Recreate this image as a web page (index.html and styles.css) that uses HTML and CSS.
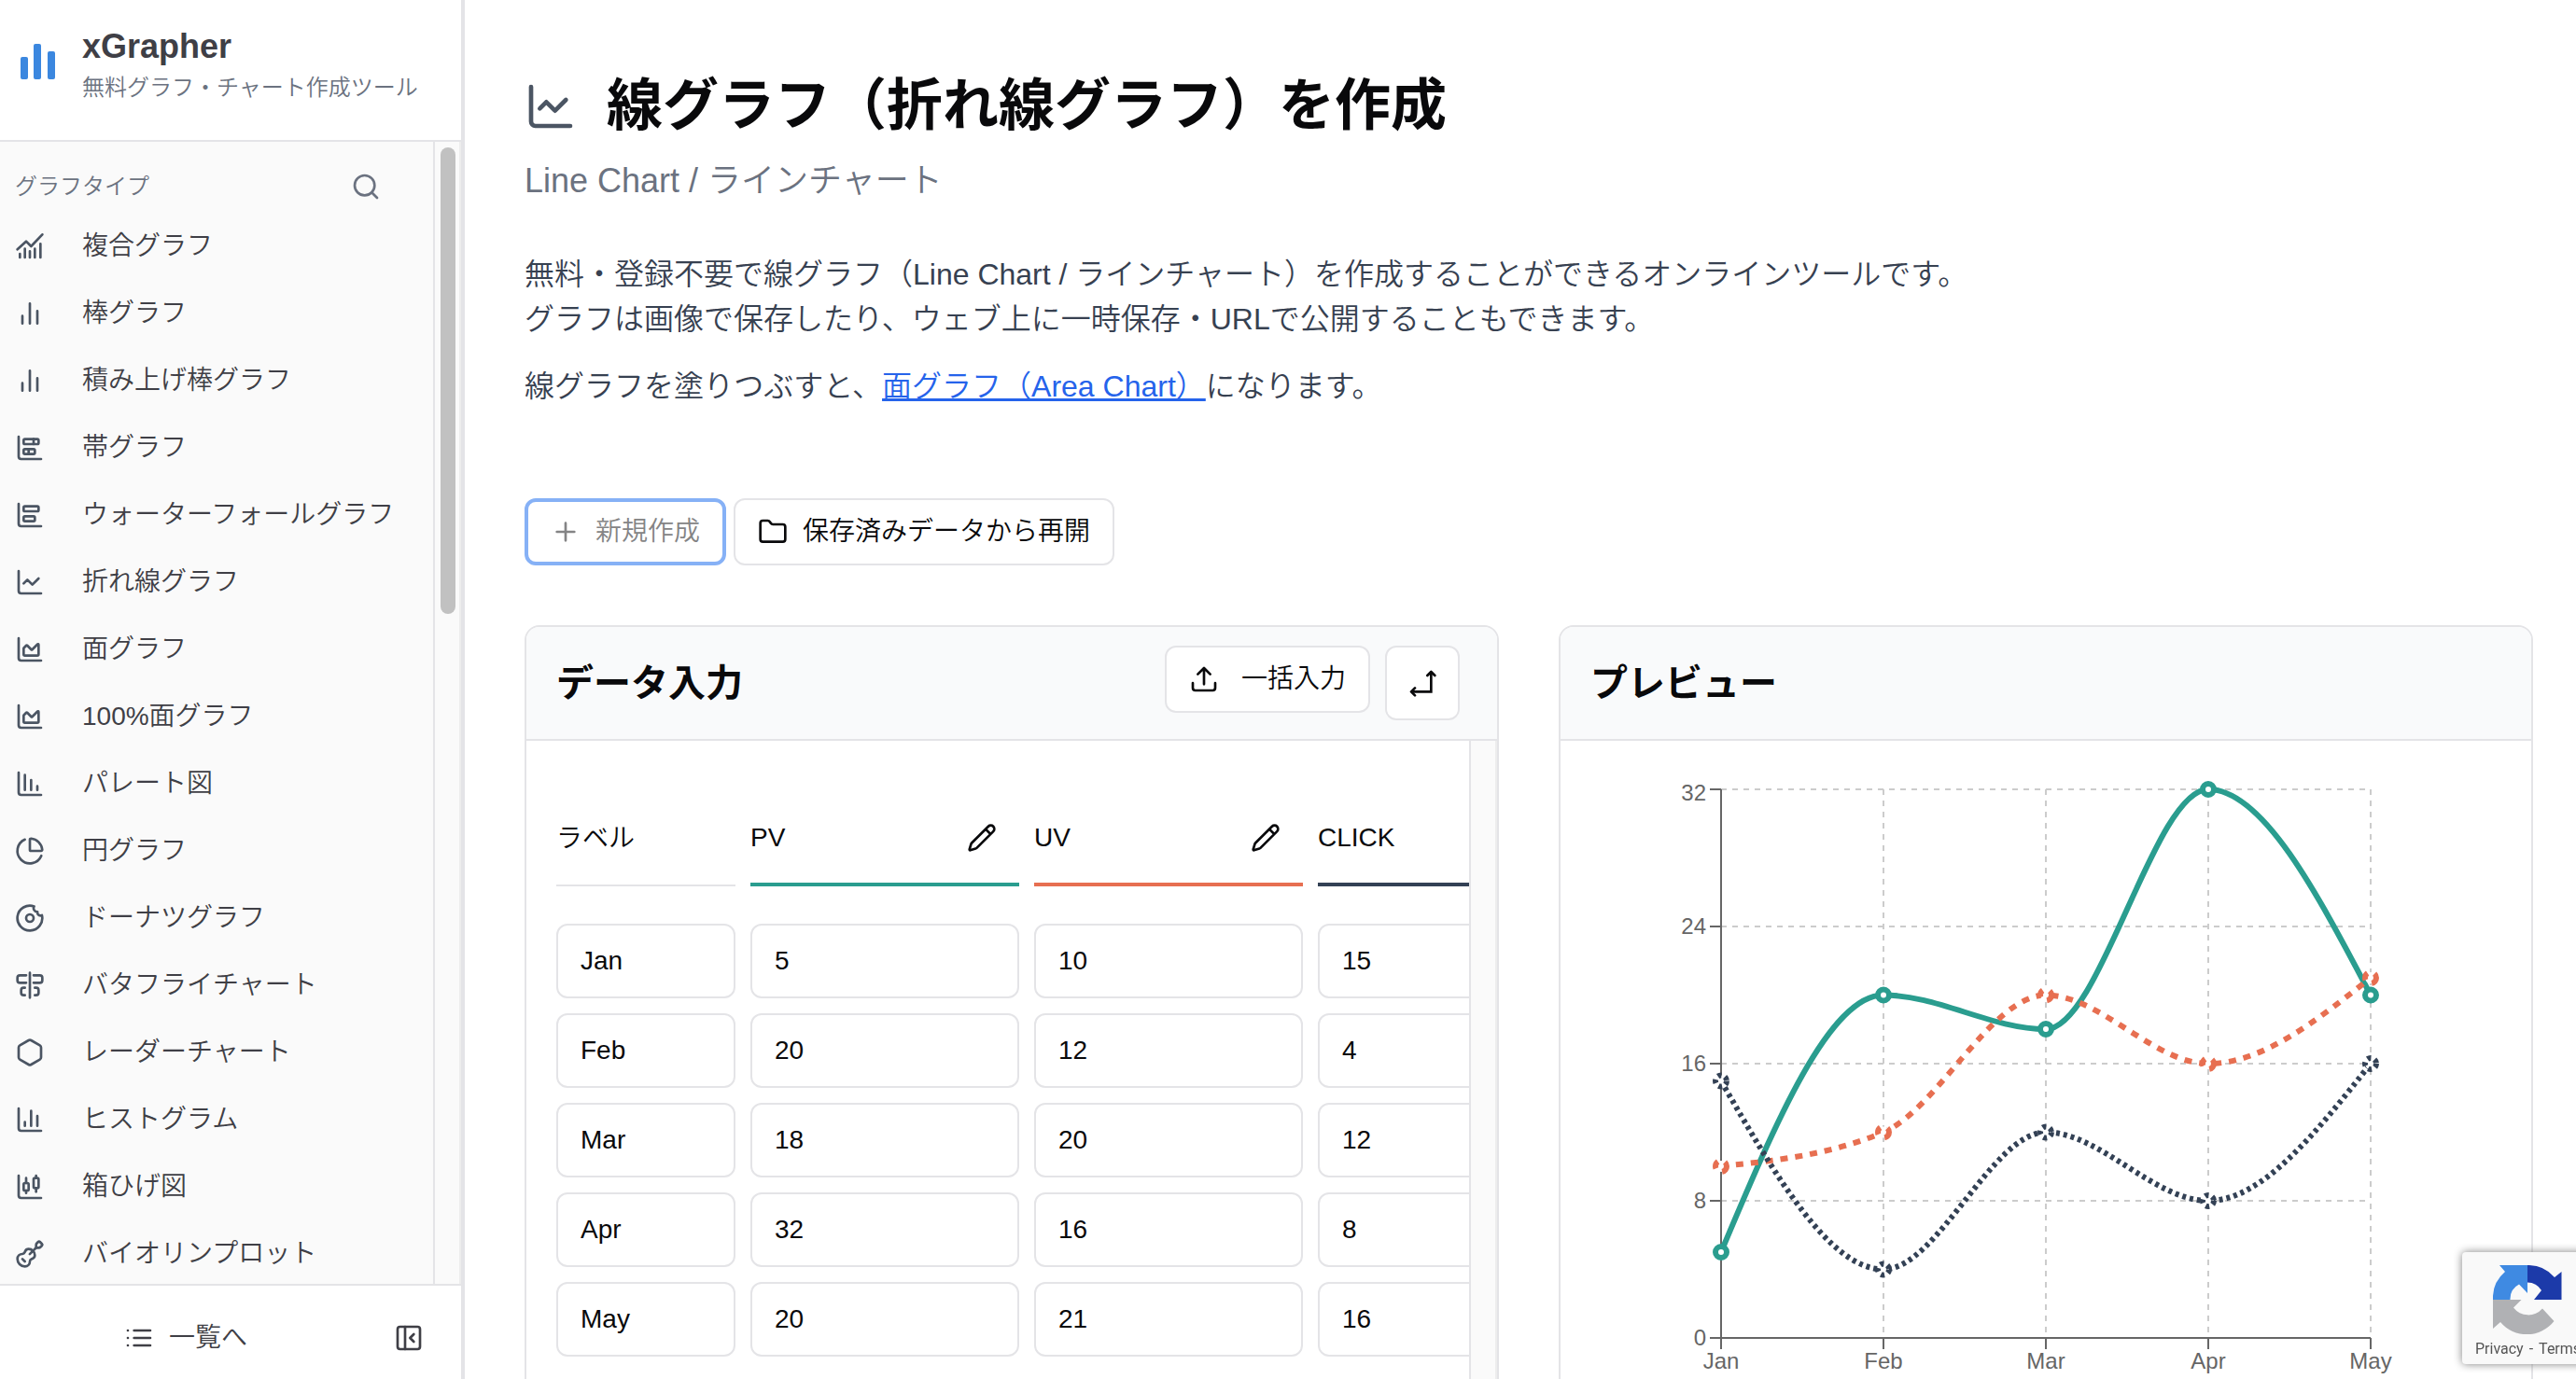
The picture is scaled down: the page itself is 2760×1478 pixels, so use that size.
FILE: index.html
```html
<!DOCTYPE html>
<html lang="ja">
<head>
<meta charset="utf-8">
<meta name="viewport" content="width=device-width, initial-scale=1">
<title>線グラフ（折れ線グラフ）を作成 | xGrapher</title>
<link rel="stylesheet" href="styles.css">
</head>
<body>
<svg class="sprite" aria-hidden="true">
  <symbol id="i-combo" viewBox="0 0 24 24"><path d="M2 14.500 9 8l4 4L22 2.500"/><path d="M4 18v3M8 14v7M12 16v5M16 14v7M20.500 10v11"/></symbol>
  <symbol id="i-bars" viewBox="0 0 24 24"><path d="M6 20v-6M12 20V4M18 20V10"/></symbol>
  <symbol id="i-stacked" viewBox="0 0 24 24"><path d="M3 3v16a2 2 0 0 0 2 2h16"/><rect x="7" y="5" width="12" height="4" rx="1"/><rect x="7" y="13" width="9" height="4" rx="1"/><path d="M15 5v4M11 13v4"/></symbol>
  <symbol id="i-waterfall" viewBox="0 0 24 24"><path d="M3 3v16a2 2 0 0 0 2 2h16"/><rect x="7" y="5" width="12" height="4" rx="1"/><rect x="7" y="13" width="9" height="4" rx="1"/></symbol>
  <symbol id="i-line" viewBox="0 0 24 24"><path d="M3 3v16a2 2 0 0 0 2 2h16"/><path d="m19 9-5 5-4-4-3 3"/></symbol>
  <symbol id="i-area" viewBox="0 0 24 24"><path d="M3 3v16a2 2 0 0 0 2 2h16"/><path d="M7 11.207a.5.5 0 0 1 .146-.353l2-2a.5.5 0 0 1 .708 0l3.292 3.292a.5.5 0 0 0 .708 0l4.292-4.292a.5.5 0 0 1 .854.353V16a1 1 0 0 1-1 1H8a1 1 0 0 1-1-1z"/></symbol>
  <symbol id="i-pareto" viewBox="0 0 24 24"><path d="M3 3v16a2 2 0 0 0 2 2h16"/><path d="M8 17V5M13 17V9M18 17v-3"/></symbol>
  <symbol id="i-pie" viewBox="0 0 24 24"><path d="M21 12c.552 0 1.005-.449.950-.998a10 10 0 0 0-8.953-8.951c-.550-.055-.998.398-.998.950v8a1 1 0 0 0 1 1z"/><path d="M21.210 15.890A10 10 0 1 1 8 2.830"/></symbol>
  <symbol id="i-donut" viewBox="0 0 24 24"><path d="M20.500 10a2.500 2.500 0 0 1-2.400-3H18a2.950 2.950 0 0 1-2.600-4.400 10 10 0 1 0 6.300 7.100c-.300.200-.800.300-1.200.300"/><circle cx="12" cy="12" r="3"/></symbol>
  <symbol id="i-butterfly" viewBox="0 0 24 24"><path d="M12 2v20M9 4H4a2 2 0 0 0-2 2v2a2 2 0 0 0 2 2h5M15 4h5a2 2 0 0 1 2 2v2a2 2 0 0 1-2 2h-5M8 14H7a2 2 0 0 0-2 2v2a2 2 0 0 0 2 2h1M16 14h1a2 2 0 0 1 2 2v2a2 2 0 0 1-2 2h-1"/></symbol>
  <symbol id="i-hexagon" viewBox="0 0 24 24"><path d="M21 16V8a2 2 0 0 0-1-1.730l-7-4a2 2 0 0 0-2 0l-7 4A2 2 0 0 0 3 8v8a2 2 0 0 0 1 1.730l7 4a2 2 0 0 0 2 0l7-4A2 2 0 0 0 21 16z"/></symbol>
  <symbol id="i-histogram" viewBox="0 0 24 24"><path d="M3 3v16a2 2 0 0 0 2 2h16"/><path d="M18 17V9M13 17V5M8 17v-3"/></symbol>
  <symbol id="i-box" viewBox="0 0 24 24"><path d="M3 3v16a2 2 0 0 0 2 2h16"/><path d="M9 5v4"/><rect width="4" height="6" x="7" y="9" rx="1"/><path d="M9 15v2M17 3v2"/><rect width="4" height="8" x="15" y="5" rx="1"/><path d="M17 13v3"/></symbol>
  <symbol id="i-violin" viewBox="0 0 24 24"><path d="m11.900 12.100 4.514-4.514"/><path d="M20.100 2.300a1 1 0 0 0-1.400 0l-1.114 1.114A2 2 0 0 0 17 4.828v1.344a2 2 0 0 1-.586 1.414A2 2 0 0 1 17.828 7h1.344a2 2 0 0 0 1.414-.586L21.700 5.300a1 1 0 0 0 0-1.400z"/><path d="m6 16 2 2"/><path d="M8.230 9.850A3 3 0 0 1 11 8a5 5 0 0 1 5 5 3 3 0 0 1-1.850 2.770l-.920.380A2 2 0 0 0 12 18a4 4 0 0 1-4 4 6 6 0 0 1-6-6 4 4 0 0 1 4-4 2 2 0 0 0 1.850-1.230z"/></symbol>
  <symbol id="i-search" viewBox="0 0 24 24"><circle cx="11" cy="11" r="8"/><path d="m21 21-4.300-4.300"/></symbol>
  <symbol id="i-list" viewBox="0 0 24 24"><path d="M3 6h.010M3 12h.010M3 18h.010M8 6h13M8 12h13M8 18h13"/></symbol>
  <symbol id="i-panel" viewBox="0 0 24 24"><rect width="18" height="18" x="3" y="3" rx="2"/><path d="M9 3v18M16 15l-3-3 3-3"/></symbol>
  <symbol id="i-plus" viewBox="0 0 24 24"><path d="M5 12h14M12 5v14"/></symbol>
  <symbol id="i-folder" viewBox="0 0 24 24"><path d="M20 20a2 2 0 0 0 2-2V8a2 2 0 0 0-2-2h-7.900a2 2 0 0 1-1.690-.900L9.600 3.900A2 2 0 0 0 7.930 3H4a2 2 0 0 0-2 2v13a2 2 0 0 0 2 2z"/></symbol>
  <symbol id="i-upload" viewBox="0 0 24 24"><path d="M12 16V3M7 8l5-5 5 5M21 15v4a2 2 0 0 1-2 2H5a2 2 0 0 1-2-2v-4"/></symbol>
  <symbol id="i-swap" viewBox="0 0 24 24"><path stroke-linecap="butt" stroke-linejoin="miter" d="M19 4v15H4"/><path d="m16 6 3-3 3 3M6 16l-3 3 3 3"/></symbol>
  <symbol id="i-pencil" viewBox="0 0 24 24"><path d="M21.174 6.812a1 1 0 0 0-3.986-3.987L3.842 16.174a2 2 0 0 0-.500.830l-1.321 4.352a.5.5 0 0 0 .623.622l4.353-1.320a2 2 0 0 0 .830-.497zM15 5l4 4"/></symbol>
</svg>

<div class="app">
  <aside class="sidebar">
    <a class="brand" href="#">
      <svg class="brand-logo" viewBox="0 0 38 38" aria-hidden="true"><rect y="14" width="8" height="24" rx="2"/><rect x="14" width="8" height="38" rx="2"/><rect x="29" y="8" width="8" height="30" rx="2"/></svg>
      <span class="brand-text"><strong>xGrapher</strong><small>無料グラフ・チャート作成ツール</small></span>
    </a>
    <div class="side-body">
      <nav class="side-nav" aria-label="グラフタイプ">
        <div class="side-heading"><span>グラフタイプ</span><button class="icon-btn" type="button" aria-label="検索"><svg class="icon"><use href="#i-search"/></svg></button></div>
        <ul class="menu">
          <li><a href="#"><svg class="icon"><use href="#i-combo"/></svg>複合グラフ</a></li>
          <li><a href="#"><svg class="icon"><use href="#i-bars"/></svg>棒グラフ</a></li>
          <li><a href="#"><svg class="icon"><use href="#i-bars"/></svg>積み上げ棒グラフ</a></li>
          <li><a href="#"><svg class="icon"><use href="#i-stacked"/></svg>帯グラフ</a></li>
          <li><a href="#"><svg class="icon"><use href="#i-waterfall"/></svg>ウォーターフォールグラフ</a></li>
          <li><a href="#"><svg class="icon"><use href="#i-line"/></svg>折れ線グラフ</a></li>
          <li><a href="#"><svg class="icon"><use href="#i-area"/></svg>面グラフ</a></li>
          <li><a href="#"><svg class="icon"><use href="#i-area"/></svg>100%面グラフ</a></li>
          <li><a href="#"><svg class="icon"><use href="#i-pareto"/></svg>パレート図</a></li>
          <li><a href="#"><svg class="icon"><use href="#i-pie"/></svg>円グラフ</a></li>
          <li><a href="#"><svg class="icon"><use href="#i-donut"/></svg>ドーナツグラフ</a></li>
          <li><a href="#"><svg class="icon"><use href="#i-butterfly"/></svg>バタフライチャート</a></li>
          <li><a href="#"><svg class="icon"><use href="#i-hexagon"/></svg>レーダーチャート</a></li>
          <li><a href="#"><svg class="icon"><use href="#i-histogram"/></svg>ヒストグラム</a></li>
          <li><a href="#"><svg class="icon"><use href="#i-box"/></svg>箱ひげ図</a></li>
          <li><a href="#"><svg class="icon"><use href="#i-violin"/></svg>バイオリンプロット</a></li>
        </ul>
      </nav>
      <div class="scroll-track"><div class="scroll-thumb"></div></div>
    </div>
    <div class="side-foot">
      <a class="all-link" href="#"><svg class="icon"><use href="#i-list"/></svg>一覧へ</a>
      <button class="icon-btn panel-btn" type="button" aria-label="サイドバーを閉じる"><svg class="icon"><use href="#i-panel"/></svg></button>
    </div>
  </aside>

  <main class="main">
    <header class="page-head">
      <h1><svg class="icon title-icon"><use href="#i-line"/></svg>線グラフ（折れ線グラフ）を作成</h1>
      <p class="subtitle">Line Chart / ラインチャート</p>
    </header>
    <div class="intro">
      <p>無料・登録不要で線グラフ（Line Chart / ラインチャート）を作成することができるオンラインツールです。<br>グラフは画像で保存したり、ウェブ上に一時保存・URLで公開することもできます。</p>
      <p>線グラフを塗りつぶすと、<a href="#">面グラフ（Area Chart）</a>になります。</p>
    </div>
    <div class="actions">
      <button class="btn btn-new" type="button"><svg class="icon"><use href="#i-plus"/></svg>新規作成</button>
      <button class="btn" type="button"><svg class="icon"><use href="#i-folder"/></svg>保存済みデータから再開</button>
    </div>

    <div class="cards">
      <section class="card">
        <div class="card-head">
          <h2>データ入力</h2>
          <div class="card-tools">
            <button class="btn btn-bulk" type="button"><svg class="icon"><use href="#i-upload"/></svg>一括入力</button>
            <button class="btn btn-swap" type="button" aria-label="行と列を入れ替え"><svg class="icon"><use href="#i-swap"/></svg></button>
          </div>
        </div>
        <div class="data-body">
          <div class="data-scroll">
            <table class="data-table">
              <thead>
                <tr>
                  <th class="col-label" scope="col"><div class="th">ラベル</div></th>
                  <th class="col-value" scope="col"><div class="th th-pv">PV<button class="icon-btn" type="button" aria-label="PVを編集"><svg class="icon"><use href="#i-pencil"/></svg></button></div></th>
                  <th class="col-value" scope="col"><div class="th th-uv">UV<button class="icon-btn" type="button" aria-label="UVを編集"><svg class="icon"><use href="#i-pencil"/></svg></button></div></th>
                  <th class="col-value" scope="col"><div class="th th-click">CLICK<button class="icon-btn" type="button" aria-label="CLICKを編集"><svg class="icon"><use href="#i-pencil"/></svg></button></div></th>
                </tr>
              </thead>
              <tbody>
                <tr><td><input aria-label="ラベル 1" value="Jan"></td><td><input aria-label="Jan PV" value="5"></td><td><input aria-label="Jan UV" value="10"></td><td><input aria-label="Jan CLICK" value="15"></td></tr>
                <tr><td><input aria-label="ラベル 2" value="Feb"></td><td><input aria-label="Feb PV" value="20"></td><td><input aria-label="Feb UV" value="12"></td><td><input aria-label="Feb CLICK" value="4"></td></tr>
                <tr><td><input aria-label="ラベル 3" value="Mar"></td><td><input aria-label="Mar PV" value="18"></td><td><input aria-label="Mar UV" value="20"></td><td><input aria-label="Mar CLICK" value="12"></td></tr>
                <tr><td><input aria-label="ラベル 4" value="Apr"></td><td><input aria-label="Apr PV" value="32"></td><td><input aria-label="Apr UV" value="16"></td><td><input aria-label="Apr CLICK" value="8"></td></tr>
                <tr><td><input aria-label="ラベル 5" value="May"></td><td><input aria-label="May PV" value="20"></td><td><input aria-label="May UV" value="21"></td><td><input aria-label="May CLICK" value="16"></td></tr>
              </tbody>
            </table>
          </div>
          <div class="data-track"></div>
        </div>
      </section>

      <section class="card">
        <div class="card-head"><h2>プレビュー</h2></div>
        <svg class="chart" viewBox="0 0 1040 720" role="img" aria-label="PV、UV、CLICKの折れ線グラフ">
          <g class="grid">
            <path d="M172 52H868"/><path d="M172 199H868"/><path d="M172 346H868"/><path d="M172 493H868"/>
            <path d="M346 52V640"/><path d="M520 52V640"/><path d="M694 52V640"/><path d="M868 52V640"/>
          </g>
          <path class="axis" d="M172 52V640H868M160 52h12M160 199h12M160 346h12M160 493h12M160 640h12M172 640v12M346 640v12M520 640v12M694 640v12M868 640v12"/>
          <g class="y-labels"><text x="156" y="64">32</text><text x="156" y="207">24</text><text x="156" y="354">16</text><text x="156" y="501">8</text><text x="156" y="648">0</text></g>
          <g class="x-labels"><text x="172" y="673">Jan</text><text x="346" y="673">Feb</text><text x="520" y="673">Mar</text><text x="694" y="673">Apr</text><text x="868" y="673">May</text></g>
          <g class="series s-pv">
            <path d="M172 548C230 410 288 272.500 346 272.500C404 272.500 462 309 520 309C578 309 636 52 694 52C752 52 810 162 868 272.500"/>
            <circle cx="172" cy="548" r="6"/><circle cx="346" cy="272.500" r="6"/><circle cx="520" cy="309" r="6"/><circle cx="694" cy="52" r="6"/><circle cx="868" cy="272.500" r="6"/>
          </g>
          <g class="series s-uv">
            <path d="M172 456C230 450 288 444 346 419.500C404 395 462 272.500 520 272.500C578 272.500 636 346 694 346C752 346 810 300 868 254"/>
            <circle cx="172" cy="456" r="6"/><circle cx="346" cy="419.500" r="6"/><circle cx="520" cy="272.500" r="6"/><circle cx="694" cy="346" r="6"/><circle cx="868" cy="254" r="6"/>
          </g>
          <g class="series s-click">
            <path d="M172 364.500C230 465.500 288 566.500 346 566.500C404 566.500 462 419.500 520 419.500C578 419.500 636 493 694 493C752 493 810 419.500 868 346"/>
            <circle cx="172" cy="364.500" r="6"/><circle cx="346" cy="566.500" r="6"/><circle cx="520" cy="419.500" r="6"/><circle cx="694" cy="493" r="6"/><circle cx="868" cy="346" r="6"/>
          </g>
        </svg>
      </section>
    </div>
  </main>
</div>

<div class="captcha">
  <svg viewBox="0 0 74 74" aria-hidden="true">
    <path fill="#1c3aa9" d="M37 0A37 37 0 0 1 66 13L73.500 7V37H44L52 27A18 18 0 0 0 37 18.500Z"/>
    <path fill="#3f8ae2" d="M37 0H7L13 7A37 37 0 0 0 0 37H18.500A18 18 0 0 1 28 20.500L37 30Z"/>
    <path fill="#b0b1b4" d="M0 37V68L8 61A37 37 0 0 0 65.500 60L53 46.500A20 20 0 0 1 22 45.500L30.500 37Z"/>
  </svg>
  <div class="captcha-links"><a href="#">Privacy</a><span>-</span><a href="#">Terms</a></div>
</div>
</body>
</html>
```
FILE: styles.css
```css
* { box-sizing: border-box; }

body {
  margin: 0;
  height: 100vh;
  overflow: hidden;
  background: #fff;
  color: #09090b;
  font-family: "Liberation Sans", "Noto Sans CJK JP", sans-serif;
  font-size: 28px;
  font-weight: 350;
  line-height: 40px;
}

h1, h2, p, ul { margin: 0; padding: 0; }
h1, h2, strong { font-weight: 700; }
ul { list-style: none; }
a { color: inherit; text-decoration: none; }
button, input { font: inherit; color: inherit; }

.sprite { position: absolute; width: 0; height: 0; }

.icon {
  width: 32px;
  height: 32px;
  flex: none;
  fill: none;
  stroke: currentColor;
  stroke-width: 2;
  stroke-linecap: round;
  stroke-linejoin: round;
}

.icon-btn {
  display: flex;
  align-items: center;
  justify-content: center;
  padding: 0;
  border: 0;
  background: none;
}

.app { display: flex; height: 100vh; }

/* Sidebar */
.sidebar {
  display: flex;
  flex-direction: column;
  flex: none;
  width: 498px;
  border-right: 4px solid #e4e4e7;
  color: #3f3f46;
}

.brand {
  display: flex;
  gap: 28px;
  flex: none;
  height: 152px;
  padding: 28px 20px 0 22px;
  border-bottom: 2px solid #e4e4e7;
}
.brand-logo { width: 38px; height: 38px; margin-top: 19px; fill: #3b87df; }
.brand-text { display: flex; flex-direction: column; }
.brand-text strong { font-size: 36px; line-height: 44px; }
.brand-text small { font-size: 24px; line-height: 44px; color: #6b7280; }

.side-body { display: flex; flex: 1; min-height: 0; background: #fafafa; }
.side-nav { flex: 1; overflow: hidden; padding: 20px 16px 0; }
.side-heading {
  display: flex;
  align-items: center;
  justify-content: space-between;
  height: 56px;
  padding-right: 40px;
  font-size: 24px;
  color: #6b7280;
}
.menu a { display: flex; align-items: center; gap: 40px; height: 72px; white-space: nowrap; }
.menu .icon { color: #4b5563; }

.scroll-track {
  width: 30px;
  padding: 6px 4px 0 6px;
  border-left: 2px solid #e4e4e7;
  border-right: 2px solid #ededed;
}
.scroll-thumb { width: 16px; height: 500px; border-radius: 8px; background: #c1c1c1; }

.side-foot {
  display: flex;
  align-items: center;
  flex: none;
  height: 102px;
  padding: 12px 16px 0 0;
  border-top: 2px solid #e4e4e7;
}
.all-link { display: flex; flex: 1; align-items: center; justify-content: center; gap: 16px; }
.panel-btn { width: 80px; height: 80px; }

/* Page */
.main { flex: 1; min-width: 0; padding: 66px 46px 0 64px; }

h1 { display: flex; align-items: center; gap: 32px; font-size: 60px; line-height: 96px; }
.title-icon { width: 56px; height: 56px; color: #4b5563; }
.subtitle { margin-top: 4px; font-size: 36px; line-height: 56px; color: #6b7280; }

.intro { margin-top: 48px; font-size: 32px; line-height: 48px; color: #374151; }
.intro p + p { margin-top: 24px; }
.intro a { color: #2563eb; text-decoration: underline; }

.actions { display: flex; gap: 8px; margin-top: 96px; }
.btn {
  display: flex;
  align-items: center;
  gap: 16px;
  height: 72px;
  padding: 0 24px;
  border: 2px solid #e4e4e7;
  border-radius: 12px;
  background: #fff;
}
.btn-new { border: 4px solid #86b1f6; color: #848485; }
.btn-bulk { gap: 24px; }
.btn-swap { width: 80px; height: 80px; padding: 0; justify-content: center; }

.cards { display: grid; grid-template-columns: 1fr 1fr; gap: 64px; margin-top: 64px; }
.card { min-width: 0; border: 2px solid #e4e4e7; border-radius: 16px; overflow: hidden; }
.card-head {
  display: flex;
  align-items: center;
  justify-content: space-between;
  height: 122px;
  padding: 0 40px 0 32px;
  border-bottom: 2px solid #e4e4e7;
  background: #f9fafb;
}
h2 { font-size: 40px; line-height: 56px; }
.card-tools { display: flex; align-items: flex-start; gap: 16px; }

.data-body { display: flex; }
.data-scroll { flex: 1; min-width: 0; overflow: hidden; padding: 64px 0 32px 16px; }
.data-track {
  width: 30px;
  border-left: 2px solid #e4e4e7;
  border-right: 2px solid #ededed;
  background: #fafafa;
}
.data-table { width: 1120px; table-layout: fixed; border-collapse: separate; border-spacing: 16px 0; }
.data-table th, .data-table td { padding: 0; font-weight: 350; text-align: left; }
.data-table td { height: 96px; }
.data-table thead tr { height: 124px; vertical-align: top; }
.col-label { width: 192px; }
.col-value { width: 288px; }
.th {
  display: flex;
  align-items: center;
  justify-content: space-between;
  height: 92px;
  padding-right: 24px;
  padding-bottom: 8px;
  border-bottom: 2px solid #e4e4e7;
}
.th-pv { border-bottom: 4px solid #2a9d8f; }
.th-uv { border-bottom: 4px solid #e76f51; }
.th-click { border-bottom: 4px solid #334155; }
.data-table input {
  display: block;
  width: 100%;
  height: 80px;
  padding: 0 24px;
  border: 2px solid #e4e4e7;
  border-radius: 12px;
  background: #fff;
}

/* Chart */
.chart { display: block; width: 100%; font-size: 24px; }
.grid { fill: none; stroke: #ccc; stroke-width: 2; stroke-dasharray: 6 6; }
.axis { fill: none; stroke: #666; stroke-width: 2; }
.y-labels { fill: #666; text-anchor: end; }
.x-labels { fill: #666; text-anchor: middle; }
.series { stroke-width: 6; }
.series path { fill: none; }
.series circle { fill: #fff; }
.s-pv { stroke: #2a9d8f; }
.s-uv { stroke: #e76f51; stroke-dasharray: 8 8; }
.s-click { stroke: #334155; stroke-dasharray: 4 4; }

.captcha {
  position: fixed;
  right: -390px;
  bottom: 16px;
  width: 512px;
  height: 120px;
  padding: 14px 14px 0;
  border-radius: 4px;
  background: #f9f9f9;
  box-shadow: 0 0 10px #808080;
  font-family: Roboto, sans-serif;
  font-size: 16px;
  font-weight: 400;
  line-height: 32px;
  color: #555;
}
.captcha svg { display: block; width: 74px; height: 74px; margin-left: 19px; }
.captcha-links { display: flex; gap: 6px; }
```
